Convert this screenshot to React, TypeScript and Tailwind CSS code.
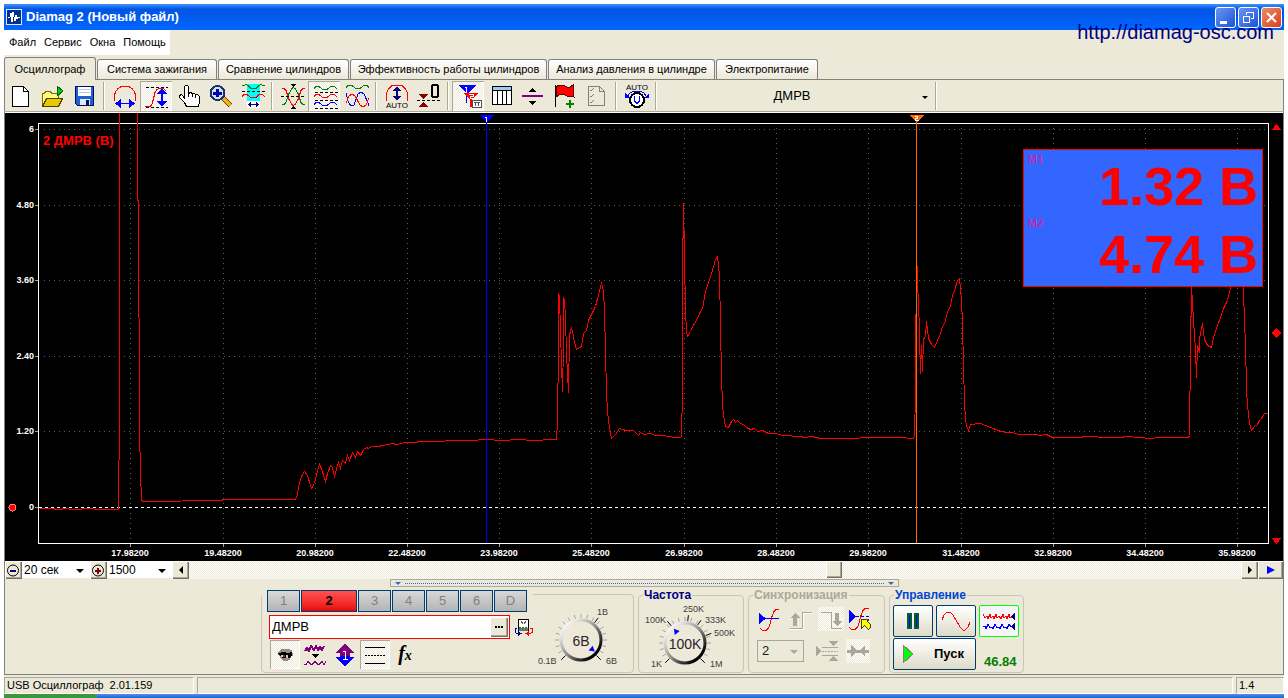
import { useState } from "react"
import type { ReactNode } from "react"

const HATCH = "bg-[repeating-conic-gradient(#ffffff_0_25%,#ece9d8_0_50%)] bg-[length:2px_2px]"

const tabs = [
  { title: "Осциллограф", width: "w-[92px]" },
  { title: "Система зажигания", width: "w-[120px]" },
  { title: "Сравнение цилиндров", width: "w-[131px]" },
  { title: "Эффективность работы цилиндров", width: "w-[197px]" },
  { title: "Анализ давления в цилиндре", width: "w-[167px]" },
  { title: "Электропитание", width: "w-[102px]" },
]

const yAxis = [
  { y: 129, label: "6" },
  { y: 205, label: "4.80" },
  { y: 280, label: "3.60" },
  { y: 356, label: "2.40" },
  { y: 431, label: "1.20" },
  { y: 507, label: "0" },
]

const xAxis = [
  { x: 130, label: "17.98200" },
  { x: 223, label: "19.48200" },
  { x: 315, label: "20.98200" },
  { x: 407, label: "22.48200" },
  { x: 499, label: "23.98200" },
  { x: 591, label: "25.48200" },
  { x: 684, label: "26.98200" },
  { x: 776, label: "28.48200" },
  { x: 868, label: "29.98200" },
  { x: 961, label: "31.48200" },
  { x: 1053, label: "32.98200" },
  { x: 1145, label: "34.48200" },
  { x: 1237, label: "35.98200" },
]

// Air flow sensor signal
const trace =
  "39,508 53,508 55,509 60,509 64,508 72,509 92,508 95,509 118,509 118,491 119,430 119,100 137,100 137,200 138,200 139,430 140,472 141,500 143,501 220,500 224,499 295,499 297,494 299,482 301,476 304,471 307,475 311,488 314,483 317,470 319,464 321,468 325,481 327,473 330,465 332,467 334,477 336,468 338,462 340,468 342,460 345,463 347,455 349,460 352,452 355,457 357,451 360,455 363,449 366,447 368,448 371,446 378,446 382,445 392,443 396,444 405,442 415,442 419,441 440,441 450,440 470,440 486,439 500,440 520,439 530,440 555,439 556,439 557,420 558,348 558,293 559,296 560,331 561,364 562,391 563,345 563,297 564,300 565,316 566,355 567,372 568,392 569,335 571,327 573,336 574,342 576,349 579,347 581,346 583,333 586,330 588,320 591,314 595,306 597,298 600,287 601,283 603,290 604,310 605,352 606,391 607,411 609,427 611,438 615,434 619,428 622,429 626,430 633,430 638,435 640,432 643,434 650,433 655,435 663,435 668,436 675,437 680,437 681,436 682,391 682,275 683,203 684,255 685,313 686,330 687,336 690,331 692,326 695,322 700,311 702,308 705,291 708,282 711,273 715,259 717,256 719,275 720,324 721,377 722,403 723,415 725,426 728,427 731,421 733,419 735,422 737,420 740,423 743,424 746,427 750,429 754,428 757,431 762,430 768,433 776,433 782,435 800,436 804,437 812,436 820,438 850,438 870,437 900,437 912,438 914,437 915,391 916,241 917,288 918,297 919,335 920,373 921,345 922,371 923,338 925,337 926,321 928,338 931,344 934,347 937,340 940,333 942,326 944,323 947,312 950,305 952,295 954,290 957,280 959,278 961,300 962,322 963,367 964,400 965,420 966,425 968,430 970,424 980,423 985,425 990,427 998,430 1005,432 1012,432 1018,434 1035,434 1040,435 1046,434 1052,437 1080,437 1084,436 1110,437 1120,437 1126,436 1150,438 1160,437 1188,437 1189,435 1190,348 1191,285 1193,320 1195,350 1196,377 1197,345 1199,352 1199,338 1202,323 1204,339 1207,345 1211,347 1213,337 1216,328 1220,317 1223,308 1227,300 1230,287 1238,278 1243,287 1244,325 1245,340 1246,390 1247,405 1249,423 1251,430 1254,426 1257,424 1259,420 1261,418 1264,413 1267,413"

function Icon({ children, size = "h-[30px] w-8", box = "0 0 32 30" }: { children: ReactNode; size?: string; box?: string }) {
  return (
    <svg className={`${size} shrink-0`} viewBox={box} fill="none" shapeRendering="crispEdges" aria-hidden="true">
      {children}
    </svg>
  )
}

function ToolButton({ label, pressed = false, children }: { label: string; pressed?: boolean; children: ReactNode }) {
  return (
    <button
      type="button"
      aria-label={label}
      className={`flex h-[30px] w-8 shrink-0 items-center justify-center ${
        pressed ? `${HATCH} shadow-[inset_1px_1px_#aca899,inset_-1px_-1px_#ffffff]` : ""
      }`}
    >
      <Icon>{children}</Icon>
    </button>
  )
}

function Separator() {
  return (
    <div className="flex h-7 w-2 shrink-0 justify-center">
      <div className="w-0.5 border-l border-r border-l-[#aca899] border-r-white" />
    </div>
  )
}

function Toolbar() {
  return (
    <div className="flex h-[31px] items-center">
      <ToolButton label="Новый файл">
        <path d="M8.5 5.5h11l5 5v15h-16z" fill="#fff" stroke="#000" />
        <path d="M19.5 5.5v5h5" stroke="#000" />
      </ToolButton>
      <ToolButton label="Открыть">
        <path d="M6.5 25.5v-13h2l1-2h5l1 2h7v5" fill="#ffff80" stroke="#807000" />
        <path d="M6.5 25.5l4-8h16l-4 8z" fill="#e8c800" stroke="#504000" />
        <path d="M21 5l6 5-6 5z" fill="#00d020" stroke="#006000" />
      </ToolButton>
      <ToolButton label="Сохранить">
        <path d="M7.5 5.5h18v19h-16l-2-2z" fill="#2060c8" stroke="#001060" />
        <path d="M10 6h13v9H10z" fill="#fff" />
        <path d="M11 8.5h11M11 11.5h11" stroke="#b0c8e8" />
        <path d="M12 18h10v6H12z" fill="#e0e8f8" />
        <path d="M18 19h3v5h-3z" fill="#001060" />
      </ToolButton>
      <Separator />
      <ToolButton label="Масштаб по горизонтали">
        <path d="M6.5 20v-6l1-3 2-3 3-2 3-1h3l3 1 3 2 2 3 1 3v6" stroke="#f00" />
        <path d="M10 22.5h14" stroke="#0000ff" />
        <path d="M13 18v9l-6-4.5zM21 18v9l6-4.5z" fill="#0000ff" />
      </ToolButton>
      <ToolButton label="Масштаб по вертикали" pressed>
        <path d="M6 6.5h22M6 26.5h22" stroke="#000" strokeDasharray="3 2" />
        <path d="M5 25.5h5l2-2 1-4 2-8 2-3 2-1h4l3 2" stroke="#f00" />
        <path d="M22 10v13" stroke="#0000ff" strokeWidth="2" />
        <path d="M17 13h10l-5-6zM17 20h10l-5 6z" fill="#0000ff" />
      </ToolButton>
      <ToolButton label="Рука">
        <path
          d="M12.5 17V5.5l1-1h2l1 1v7l2-1 2 1 2 0 1 1 2 0 2 2v6l-1 4h-12l-2-4-5-5v-2l2-1z"
          fill="#fff"
          stroke="#000"
        />
        <path d="M16.500 12v4M20.500 13v3M23.500 14v3" stroke="#000" />
      </ToolButton>
      <ToolButton label="Лупа">
        <path d="M19 17l8 8" stroke="#604000" strokeWidth="5" />
        <path d="M19 17l8 8" stroke="#f0b020" strokeWidth="3" />
        <circle cx="13.5" cy="12" r="7" fill="#c8e4f8" stroke="#203060" strokeWidth="2" />
        <path d="M9 12h9M13.5 8v8" stroke="#0000b0" strokeWidth="3" />
      </ToolButton>
      <ToolButton label="Измерение интервала">
        <path d="M11 3h13v18H11z" fill="#00ffff" />
        <path d="M11 20h13v7H11z" fill="#fff" />
        <path d="M6 4.5h2l2-1 2 1 3 3h5l3-3 2-1 2 1h2" stroke="#008000" />
        <path d="M6 10.5h23" stroke="#000" strokeDasharray="3 2" />
        <path d="M6 15.5l2-2h3l4 3h5l3-3h3l3 2" stroke="#f00" />
        <path d="M12 23.5h11" stroke="#000080" />
        <path d="M15 21v5l-3-2.5zM20 21v5l3-2.5z" fill="#000080" />
      </ToolButton>
      <Separator />
      <ToolButton label="Центрировать">
        <path d="M6 23.5h2l2-2 3-9 3-5 1-1 2 1 3 5 3 9 2 2h2" stroke="#008000" />
        <path d="M6 7.5h2l2 2 3 9 3 5 1 1 2-1 3-5 3-9 2-2h2" stroke="#f00" />
        <path d="M5 15.5h24" stroke="#000" strokeDasharray="3 2" />
        <path d="M14 3h6l-3 3zM14 28h6l-3-3z" fill="#000" />
      </ToolButton>
      <ToolButton label="Раздельные каналы" pressed>
        <path d="M6 7.500l2-2h3l4 3h4l4-3h3l3 2" stroke="#008000" />
        <path d="M6 15.500l2-2h3l4 3h4l4-3h3l3 2" stroke="#f00" />
        <path d="M6 23.500l2-2h3l4 3h4l4-3h3l3 2" stroke="#00f" />
        <path d="M7 11.5h23M7 19.5h23M7 27.5h23" stroke="#000" strokeDasharray="3 2" />
      </ToolButton>
      <ToolButton label="Совместить каналы">
        <path d="M6 6.500l2-2h4l4 3h4l4-3h3l2 2" stroke="#008000" />
        <path d="M6 12l2 8 3 5 3-1 4-11 3-2 3 2 4 9 1 3" stroke="#00f" />
        <path d="M6 22l3-7 3-2 3 2 5 9 3 2 3-2 3-7" stroke="#f00" />
      </ToolButton>
      <Separator />
      <ToolButton label="Автомасштаб">
        <path d="M6.500 20v-8l2-4 3-3 3-1h5l3 1 3 3 2 4v8" stroke="#f00" />
        <path d="M17 8v9" stroke="#000080" strokeWidth="2" />
        <path d="M13 10h8l-4-5zM13 15h8l-4 5z" fill="#000080" />
        <text x="17" y="27" textAnchor="middle" className="fill-black font-['Liberation_Sans'] text-[8px]">
          AUTO
        </text>
      </ToolButton>
      <ToolButton label="Установить ноль">
        <path d="M6 13h10l-5 5zM6 26h10l-5-5z" fill="#800000" />
        <path d="M5 19.5h23" stroke="#000" strokeDasharray="3 2" />
        <rect x="20" y="4" width="6" height="12" rx="2" stroke="#000" strokeWidth="2" />
      </ToolButton>
      <Separator />
      <ToolButton label="Маркеры" pressed>
        <path d="M6 4h18l-9 9z" fill="#00f" />
        <path d="M14.500 10v12" stroke="#00f" />
        <path d="M13 6.500h1.500v5" stroke="#fff" />
        <path d="M12 12h14l-7 8z" fill="#f00" />
        <path d="M19 18v8" stroke="#f00" strokeWidth="2" />
        <path d="M17 13.500h4v2h-3v2h3" stroke="#fff" />
        <path d="M20.5 19.5h9v7h-9z" fill="#fff" stroke="#505050" />
        <path d="M22 21.5h6M23.5 22v3M26.5 22v3" stroke="#505050" />
      </ToolButton>
      <ToolButton label="Таблица">
        <path d="M8.5 5.5h19v18h-19z" fill="#fff" stroke="#000" />
        <path d="M9 6h18v3H9z" fill="#a0c8f0" />
        <path d="M8 9.5h20M13.5 9v14M18.5 9v14M22.5 9v14" stroke="#000" />
      </ToolButton>
      <ToolButton label="Разделить">
        <path d="M6 15h21" stroke="#800080" strokeWidth="2" />
        <path d="M12 11h8l-4-4zM12 20h8l-4 4z" fill="#000" />
      </ToolButton>
      <ToolButton label="Добавить метку">
        <path d="M7.5 4v22" stroke="#000" />
        <path d="M8 6l3-2h4l4 2h3l3-2v10l1 2-4-1h-3l-4-2-4 1-3 2z" fill="#f00" stroke="#600000" />
        <path d="M18 23h8M22 19v8" stroke="#008000" strokeWidth="2" />
      </ToolButton>
      <ToolButton label="Отчёт">
        <path d="M8.5 5.5h11l5 5v14h-16z" stroke="#808080" />
        <path d="M19.5 5.5v5h5M10 9l1 1 3-3M10 15l1 1 3-3M10 21l1 1 3-3" stroke="#808080" />
      </ToolButton>
      <Separator />
      <ToolButton label="Автонастройка">
        <text x="17" y="9" textAnchor="middle" className="fill-black font-['Liberation_Sans'] text-[8px]">
          AUTO
        </text>
        <circle cx="17" cy="19" r="7" fill="#fff" stroke="#000" strokeWidth="2" />
        <path d="M14.5 15v5l2 2h1l2-2v-5" stroke="#00f" />
        <path d="M7 16l3-4 4-2h6l4 2 3 4" stroke="#00f" />
        <path d="M5 12v5h5zM29 12v5h-5z" fill="#00f" />
      </ToolButton>
      <Separator />
      <div className="relative">
        <select
          aria-label="Датчик"
          className="h-7 w-[272px] appearance-none bg-transparent pr-2 text-[13px] text-black [text-align-last:center]"
        >
          <option>ДМРВ</option>
        </select>
        <div className="pointer-events-none absolute right-1 top-3.5 border-x-[3px] border-t-[3px] border-x-transparent border-t-black" />
      </div>
      <Separator />
    </div>
  )
}

function Chart() {
  return (
    <div className="relative border-x border-[#808080] bg-black">
      <svg className="block h-auto w-full" viewBox="5 113 1278 448" shapeRendering="crispEdges" fill="none">
        {yAxis.slice(0, 5).map((t) => (
          <path key={t.label} d={`M44 ${t.y}.5H1267`} stroke="#5a5a5a" strokeDasharray="1 4" />
        ))}
        {xAxis.map((t) => (
          <g key={t.label}>
            <path d={`M${t.x}.5 128V543`} stroke="#5a5a5a" strokeDasharray="1 4" />
            <path d={`M${t.x}.5 544v3`} stroke="#a0a0a0" />
          </g>
        ))}
        <path d="M39 507.5H1268" stroke="#ffffff" strokeDasharray="3 3" />
        <path d="M38.5 123.5H1268.5V543.5H38.5Z" stroke="#ffffff" />
        <g className="fill-white font-['Liberation_Sans'] text-[9px] font-bold">
          {yAxis.map((t) => (
            <g key={t.label}>
              <text x="34" y={t.y + 3} textAnchor="end">
                {t.label}
              </text>
              <path d={`M35 ${t.y}.5h3`} stroke="#a0a0a0" />
            </g>
          ))}
          {xAxis.map((t) => (
            <text key={t.label} x={t.x} y="556" textAnchor="middle">
              {t.label}
            </text>
          ))}
        </g>
        <polyline points={trace} stroke="#ff0000" transform="translate(0.5 0.5)" />
        <text x="43" y="145" className="fill-[#ff0000] font-['Liberation_Sans'] text-[13px] font-bold">
          2 ДМРВ (В)
        </text>

        {/* Cursors */}
        <path d="M486.5 118V543" stroke="#0000ff" />
        <path d="M479 115h15l-7 8z" fill="#0000ff" />
        <path d="M485 117.5h1.5v4" stroke="#fff" />
        <path d="M916.5 118V543" stroke="#ff6600" />
        <path d="M909 115h15l-7 8z" fill="#ff6600" />
        <path d="M915 116.5h2.5v2h-2v2h3" stroke="#fff" />

        {/* Level handles */}
        <circle cx="12.5" cy="507.5" r="3.5" fill="#ff0000" stroke="#ff8080" />
        <path d="M1276.500 124l5 6h-10zM1276.500 328l5 5-5 5-5-5zM1276.500 544l5-6h-10z" fill="#ff0000" />
      </svg>

      <div className="absolute right-5 top-9 flex h-[138px] w-[240px] justify-between border border-[#ff0000] bg-[#3366ff] px-1 text-[#ff0000]">
        <div className="text-[11px] text-[#f81090]">
          <div className="h-16 pt-px">M1</div>
          <div className="h-16 pt-px">M2</div>
        </div>
        <div className="pt-0.5 text-right text-[54px] leading-[68px] font-bold">
          <div>1.32 В</div>
          <div>4.74 В</div>
        </div>
      </div>
    </div>
  )
}

const raised = "bg-[#ece9d8] shadow-[inset_1px_1px_#ffffff,inset_-1px_-1px_#716f64,inset_-2px_-2px_#aca899]"

function ScrollRow() {
  return (
    <div className="flex h-[18px] border-x border-[#808080]">
      <button type="button" aria-label="Уменьшить" className={`w-[17px] shrink-0 ${raised}`}>
        <Icon size="h-[17px] w-[17px]" box="0 0 17 17">
          <circle cx="8" cy="8.5" r="5.5" stroke="#000" shapeRendering="auto" />
          <path d="M5 8.5h6" stroke="#000080" strokeWidth="2" />
        </Icon>
      </button>
      <div className="relative">
        <select aria-label="Время" className="h-[17px] w-[68px] appearance-none bg-white pl-0.5 text-xs">
          <option>20 сек</option>
        </select>
        <div className="pointer-events-none absolute right-1.5 top-2 border-x-4 border-t-4 border-x-transparent border-t-black" />
      </div>
      <button type="button" aria-label="Увеличить" className={`w-[17px] shrink-0 ${raised}`}>
        <Icon size="h-[17px] w-[17px]" box="0 0 17 17">
          <circle cx="8" cy="8.5" r="5.5" stroke="#000" shapeRendering="auto" />
          <path d="M5 9h6M8 6v6" stroke="#800000" strokeWidth="2" />
        </Icon>
      </button>
      <div className="relative">
        <select aria-label="Точек" className="h-[17px] w-[65px] appearance-none bg-white pl-0.5 text-xs">
          <option>1500</option>
        </select>
        <div className="pointer-events-none absolute right-1.5 top-2 border-x-4 border-t-4 border-x-transparent border-t-black" />
      </div>
      <button type="button" aria-label="Назад" className={`flex w-[17px] shrink-0 items-center justify-center ${raised}`}>
        <div className="border-y-4 border-r-4 border-y-transparent border-r-black" />
      </button>
      <div className={`flex flex-1 justify-end pr-[399px] ${HATCH}`}>
        <div className={`h-[17px] w-4 ${raised}`} />
      </div>
      <button type="button" aria-label="Вперёд" className={`flex w-[17px] shrink-0 items-center justify-center ${raised}`}>
        <div className="border-y-4 border-l-4 border-y-transparent border-l-black" />
      </button>
      <button type="button" aria-label="Следить" className={`flex w-[25px] shrink-0 items-center justify-center ${raised}`}>
        <div className="border-y-4 border-l-8 border-y-transparent border-l-[#0000ff]" />
      </button>
    </div>
  )
}

interface Mark {
  angle: number
  label: string
  x: number
  y: number
}

function Knob({ id, box, size, value, pointer, marks }: { id: string; box: string; size: string; value: string; pointer: number; marks: Mark[] }) {
  const at = (deg: number, r: number) => {
    const a = (deg * Math.PI) / 180
    return `${(Math.cos(a) * r).toFixed(1)} ${(-Math.sin(a) * r).toFixed(1)}`
  }
  const ticks = Array.from({ length: 19 }, (_, i) => 225 - i * 15)

  return (
    <svg className={size} viewBox={box} fill="none">
      <defs>
        <linearGradient id={id} x1="0" y1="0" x2="1" y2="1">
          <stop offset="0.1" stopColor="#ffffff" />
          <stop offset="0.5" stopColor="#909090" />
          <stop offset="0.85" stopColor="#000000" />
        </linearGradient>
      </defs>
      {ticks.map((deg) => (
        <path key={deg} d={`M${at(deg, 22)}L${at(deg, 26)}`} stroke="#a8a594" />
      ))}
      {marks.map((m) => (
        <path key={m.label} d={`M${at(m.angle, 22)}L${at(m.angle, 28)}`} stroke="#000" />
      ))}
      <circle r="20" stroke={`url(#${id})`} strokeWidth="3" />
      <path d={`M${at(pointer, 18)}L${at(pointer + 14, 13)}L${at(pointer - 14, 13)}Z`} fill="#0000ff" />
      <text y="6" textAnchor="middle" className="fill-[#302030] font-['Liberation_Sans'] text-[14px]">
        {value}
      </text>
      <g className="fill-[#404040] font-['Liberation_Sans'] text-[9px]">
        {marks.map((m) => (
          <text key={m.label} x={m.x} y={m.y}>
            {m.label}
          </text>
        ))}
      </g>
    </svg>
  )
}

function ChannelPanel() {
  const channels = ["1", "2", "3", "4", "5", "6", "D"]
  return (
    <div className="mt-[5px] flex h-[79px] w-[373px] rounded border border-[#c9c6b5]">
      <div className="-mt-[5px] h-20 w-[271px] bg-[#ece9d8] pl-[5px]">
        <div className="flex gap-px">
          {channels.map((c) => (
            <button
              key={c}
              type="button"
              className={
                c === "2"
                  ? "h-[22px] w-14 border border-[#003c74] bg-linear-to-b from-[#ff5050] to-[#e80000] text-[13px] font-bold text-black"
                  : "h-[22px] w-[33px] border border-[#003c74] bg-linear-to-b from-[#d8d8d8] to-[#b4b4b4] text-[13px] text-[#808080]"
              }
            >
              {c}
            </button>
          ))}
        </div>
        <div className="mt-[3px] ml-0.5 flex items-center gap-1">
          <div className="flex h-6 w-[241px] items-center border border-[#ff0000] bg-white pr-px">
            <input aria-label="Канал" defaultValue="ДМРВ" className="w-full min-w-0 px-0.5 text-[13px] text-black outline-none" />
            <button type="button" aria-label="Выбрать" className={`flex h-5 w-[18px] shrink-0 items-center justify-center gap-px ${raised}`}>
              <div className="h-0.5 w-0.5 bg-black" />
              <div className="h-0.5 w-0.5 bg-black" />
              <div className="h-0.5 w-0.5 bg-black" />
            </button>
          </div>
          <button type="button" aria-label="Калибровка">
            <Icon size="h-[19px] w-[19px]" box="0 0 19 19">
              <path d="M4.5 1.5h10v11h-10z" fill="#fff" stroke="#000" />
              <path d="M5 9.5h9" stroke="#008000" strokeDasharray="2 1" />
              <path d="M5 10h9v3H5z" fill="#707070" />
              <path d="M7 3l2 3M12 3l-2 3" stroke="#606060" />
              <path d="M3 10.500h-1.500v4l1 1h3" stroke="#000080" />
              <path d="M4 13v5l4-2.5z" fill="#000080" />
              <path d="M16 10.500h2v4l-2 1h-3" stroke="#f00" />
              <path d="M15 13v5l-4-2.5z" fill="#f00" />
            </Icon>
          </button>
        </div>
        <div className="mt-px ml-[3px] flex">
          <button type="button" aria-label="Показать" className={`flex h-[29px] w-[30px] items-center justify-center ${HATCH} shadow-[inset_1px_1px_#aca899,inset_-1px_-1px_#ffffff]`}>
            <Icon size="h-5 w-5" box="0 0 20 20">
              <path d="M4 6l3-2h6l4 1v3h1v3h-2l-1 4-4 1H8l-3-4-2-2V8z" fill="#909088" />
              <path d="M3 8l5-1 5 1 4-1v3l-3 3H8L5 11z" fill="#000" />
              <path d="M6 10h3v2H6zM11 10h2v3h-2z" fill="#d8c8c0" />
              <path d="M8 10h2v2H8z" fill="#c01010" />
            </Icon>
          </button>
          <button type="button" aria-label="Фильтр" className="flex h-[29px] w-[30px] items-center justify-center">
            <Icon size="h-6 w-6" box="0 0 24 24">
              <path d="M2 8l2-3 2 3 2-5 3 4 2-4 2 4 2-3 2 3 2-4" stroke="#800080" strokeWidth="2" />
              <path d="M8 11h8l-4 4z" fill="#000" />
              <path d="M1 21.5h2l2-3 3 3h1l3-3 3 3h1l3-3 2 3 2-3" stroke="#800080" />
            </Icon>
          </button>
          <button type="button" aria-label="Инверсия" className="flex h-[29px] w-[30px] items-center justify-center">
            <Icon size="h-6 w-6" box="0 0 24 24">
              <path d="M12 1l9 8v1h-4v3H7v-3H3V9z" fill="#800080" />
              <path d="M12 23l9-8v-1h-4v-1H7v1H3v1z" fill="#0000ff" />
              <path d="M10 8.500h2.500v8M10 16.500h5" stroke="#fff" />
            </Icon>
          </button>
          <button type="button" aria-label="Границы" className={`flex h-[29px] w-[30px] items-center justify-center ${HATCH} shadow-[inset_1px_1px_#aca899,inset_-1px_-1px_#ffffff]`}>
            <Icon size="h-5 w-5" box="0 0 20 20">
              <path d="M0 2.5h20M0 18.5h20" stroke="#000" />
              <path d="M0 10.5h20" stroke="#000" strokeDasharray="2 1" />
            </Icon>
          </button>
          <button type="button" aria-label="Функция" className="h-[29px] w-[30px] font-['Liberation_Serif',serif] text-xl leading-5 font-bold italic text-black">
            f<span className="text-sm">x</span>
          </button>
        </div>
      </div>
      <Knob
        id="rangeKnob"
        box="-48 -45 96 77"
        size="h-[77px] w-24"
        value="6В"
        pointer={-40}
        marks={[
          { angle: 225, label: "0.1В", x: -43, y: 24 },
          { angle: 52, label: "1В", x: 16, y: -25 },
          { angle: -45, label: "6В", x: 25, y: 24 },
        ]}
      />
    </div>
  )
}

function Group({ title, color, width, children }: { title: string; color: string; width: string; children: ReactNode }) {
  return (
    <fieldset className={`h-[84px] rounded border border-[#c9c6b5] ${width}`}>
      <legend className={`ml-1 h-3 px-px text-xs leading-3 font-bold ${color}`}>{title}</legend>
      {children}
    </fieldset>
  )
}

function SyncPanel() {
  return (
    <Group title="Синхронизация" color="text-[#aca899]" width="w-[137px]">
      <div className="flex h-9 items-center gap-1 pl-2">
        <button type="button" aria-label="Уровень">
          <Icon size="h-6 w-[27px]" box="0 0 27 24">
            <path d="M3 21.500l3 2h3l3-3 3-11 2-5 2-2h3" stroke="#f00" />
            <path d="M2 11.5h20" stroke="#00f" />
            <path d="M2 6v11l7-5.5z" fill="#00f" />
          </Icon>
        </button>
        <button type="button" aria-label="По фронту" disabled>
          <Icon size="h-6 w-[26px]" box="0 0 26 24">
            <path d="M2 22.5h13V6.5h9" stroke="#fff" />
            <path d="M2 21.5h12V5.5h10" stroke="#aca899" strokeWidth="1" />
            <path d="M7 6l5 5H9v8H5v-8H2z" fill="#aca899" />
          </Icon>
        </button>
        <button type="button" aria-label="По спаду" disabled className={HATCH}>
          <Icon size="h-6 w-[26px]" box="0 0 26 24">
            <path d="M3 5.5h10v16h11" stroke="#aca899" />
            <path d="M19 19l-5-5h3V6h4v8h3z" fill="#aca899" />
          </Icon>
        </button>
        <button type="button" aria-label="Выбрать уровень">
          <Icon size="h-6 w-6" box="0 0 24 24">
            <path d="M1 20.500l3 2h3l3-3 3-11 2-5 2-2h4" stroke="#f00" />
            <path d="M8 9.5h15" stroke="#00f" strokeDasharray="3 2" />
            <path d="M1 3v13l7-6.5z" fill="#00f" />
            <path d="M13.5 12.5h7l-1 2 3 3v3l-2 2-4-4-3 3z" fill="#ffff00" stroke="#404000" />
          </Icon>
        </button>
      </div>
      <div className="flex items-center gap-3 pt-0.5 pl-2">
        <div className="relative">
          <select
            aria-label="Канал синхронизации"
            disabled
            className="block h-[22px] w-[47px] appearance-none border border-[#aca899] pl-1 text-[13px] text-[#202020] opacity-100"
          >
            <option>2</option>
          </select>
          <div className="pointer-events-none absolute right-1.5 top-2.5 border-x-4 border-t-4 border-x-transparent border-t-[#aca899]" />
        </div>
        <Icon size="h-[22px] w-[22px]" box="0 0 22 22">
          <path d="M0 5v12l5-6zM12 1h10l-5 5zM12 21h10l-5-5z" fill="#aca899" />
          <path d="M6 7.5h16M6 15.5h16" stroke="#aca899" />
          <path d="M6 11.5h16" stroke="#aca899" strokeDasharray="2 1" />
        </Icon>
        <button type="button" aria-label="Сжать" disabled className={`-ml-1 ${HATCH}`}>
          <Icon size="h-6 w-6" box="0 0 24 24">
            <path d="M1 12h22" stroke="#aca899" strokeWidth="3" />
            <path d="M5 6v12l6-6zM19 6v12l-6-6z" fill="#aca899" />
          </Icon>
        </button>
      </div>
    </Group>
  )
}

function ControlPanel() {
  const xpButton = "flex h-8 items-center rounded-xs border border-[#003c74] bg-linear-to-b from-white to-[#dedbc8]"
  return (
    <Group title="Управление" color="text-[#0046d5]" width="w-[135px]">
      <div className="flex gap-[3px] pt-1 pl-[3px]">
        <button type="button" aria-label="Пауза" className={`w-10 justify-center ${xpButton}`}>
          <Icon size="h-4 w-4" box="0 0 16 16">
            <path d="M3 1h3v14H3zM10 1h3v14h-3z" fill="#00f" stroke="#006030" strokeWidth="2" />
          </Icon>
        </button>
        <button type="button" aria-label="Осциллограмма" className={`w-10 justify-center ${xpButton}`}>
          <Icon size="h-6 w-7" box="0 0 28 24">
            <path d="M0 11l2-5 3-3h3l3 3 7 12 3 3h2l3-3 2-5" stroke="#f00" />
          </Icon>
        </button>
        <button type="button" aria-label="Запись" className="flex h-8 w-10 items-center justify-center rounded-xs border border-[#00ff00] bg-[#f5f4f8]">
          <Icon size="h-6 w-8" box="0 0 32 24">
            <path d="M0 5.500l2 3 2-1 1 2 2-4 1 3 2-1 1 2 2-4 1 3 2-1 2 2 2-4 1 3 2-1 1 2 2-4 1 3h3" stroke="#f00" />
            <path d="M0 17.500h2l1 2 2-4 2 3h2l1 1 2-4 2 3h2l1 1 2-4 2 3h2l1 1 2-4 2 2h2" stroke="#00f" />
            <path d="M32 4v7l-4-3.500zM32 14v7l-4-3.500z" fill="#000080" />
          </Icon>
        </button>
      </div>
      <div className="flex items-end gap-2 pt-px pl-[3px]">
        <button type="button" className={`w-[83px] gap-5 pl-2 text-[13px] font-bold text-black ${xpButton}`}>
          <Icon size="h-5 w-3" box="0 0 12 20">
            <path d="M1 1v18l10-9z" fill="#00ff00" stroke="#808080" />
          </Icon>
          Пуск
        </button>
        <span className="text-[13px] leading-4 font-bold text-[#008000]">46.84</span>
      </div>
    </Group>
  )
}

export default function App() {
  const [active, setActive] = useState(0)

  return (
    <div className="bg-white px-1 pt-1 font-['Liberation_Sans',Arial,sans-serif] text-[11px] text-black">
      <div className="relative bg-[#ece9d8]">
        {/* Title bar */}
        <header className="flex h-[26px] items-center justify-between bg-linear-to-b from-[#3d95ff] via-[#0054e3] via-20% to-[#0066ff] pr-0.5 pl-0.5">
          <div className="flex items-center gap-1">
            <Icon size="h-4 w-4" box="0 0 16 16">
              <path d="M0.5 0.5h15v15H0.5z" fill="#003090" stroke="#e0e8ff" />
              <path d="M2 8h2l1-4 1 9 1-10 2 9 1-6 1 4 1-2h2" stroke="#fff" />
            </Icon>
            <h1 className="text-[13px] font-bold text-white">Diamag 2 (Новый файл)</h1>
          </div>
          <div className="flex gap-0.5">
            <button type="button" aria-label="Свернуть" className="h-[21px] w-[21px] rounded-[3px] border border-white bg-linear-to-br from-[#6a96f0] to-[#1c50d8]">
              <Icon size="h-[19px] w-[19px]" box="0 0 19 19">
                <path d="M4 13h7v3H4z" fill="#fff" />
              </Icon>
            </button>
            <button type="button" aria-label="Восстановить" className="h-[21px] w-[21px] rounded-[3px] border border-white bg-linear-to-br from-[#6a96f0] to-[#1c50d8]">
              <Icon size="h-[19px] w-[19px]" box="0 0 19 19">
                <path d="M7.5 7V4.5h7v6H12M4.5 8.5h6v6h-6zM4 8h7M7 4h8" stroke="#fff" />
              </Icon>
            </button>
            <button type="button" aria-label="Закрыть" className="h-[21px] w-[21px] rounded-[3px] border border-white bg-linear-to-br from-[#ec8a68] to-[#d83c10]">
              <Icon size="h-[19px] w-[19px]" box="0 0 19 19">
                <path d="M5 5l9 9M14 5l-9 9" stroke="#fff" strokeWidth="2" shapeRendering="auto" />
              </Icon>
            </button>
          </div>
        </header>
        <a href="http://diamag-osc.com" className="absolute top-4 right-2.5 text-xl leading-6 text-[#000080]">
          http://diamag-osc.com
        </a>

        {/* Menu */}
        <nav className="flex h-[25px] w-[166px] items-center gap-2 bg-white pl-[5px]">
          <button type="button">Файл</button>
          <button type="button">Сервис</button>
          <button type="button">Окна</button>
          <button type="button">Помощь</button>
        </nav>

        {/* Tabs */}
        <div role="tablist" className="flex h-6 items-end gap-px">
          {tabs.map((tab, i) => (
            <button
              key={tab.title}
              type="button"
              role="tab"
              aria-selected={i === active}
              onClick={() => setActive(i)}
              className={`${tab.width} shrink-0 rounded-t-[3px] border-x border-t border-[#808080] whitespace-nowrap ${
                i === active ? "-mb-px h-[23px] bg-[#ece9d8]" : "h-5 bg-linear-to-b from-white to-[#ece9d8]"
              }`}
            >
              {tab.title}
            </button>
          ))}
        </div>

        <div className="border-x border-t border-[#808080]">
          <div className="-mx-px border-b border-[#aca899]">
            <Toolbar />
          </div>
          <div className="h-px bg-white" />
        </div>

        <Chart />
        <ScrollRow />

        <div className="border-x border-b border-[#808080]">
          <div className="mx-auto flex h-2 w-[509px] items-center justify-between border border-[#aca899] px-1">
            <div className="border-x-[3px] border-t-[3px] border-x-transparent border-t-[#316ac5]" />
            <div className="mx-1 flex-1 border-t border-dotted border-[#316ac5]" />
            <div className="border-x-[3px] border-t-[3px] border-x-transparent border-t-[#316ac5]" />
          </div>
          <div className="flex h-[87px] justify-center gap-1 pt-0.5 pr-[3px]">
            <ChannelPanel />
            <Group title="Частота" color="text-[#000080]" width="w-[106px]">
              <Knob
                id="rateKnob"
                box="-46 -42 104 71"
                size="h-[71px] w-[104px]"
                value="100K"
                pointer={128}
                marks={[
                  { angle: 225, label: "1K", x: -34, y: 24 },
                  { angle: 129, label: "100K", x: -40, y: -20 },
                  { angle: 83, label: "250K", x: -2, y: -31 },
                  { angle: 55, label: "333K", x: 20, y: -20 },
                  { angle: 20, label: "500K", x: 29, y: -7 },
                  { angle: -45, label: "1M", x: 25, y: 24 },
                ]}
              />
            </Group>
            <SyncPanel />
            <ControlPanel />
          </div>
        </div>

        {/* Status bar */}
        <footer className="flex h-[19px] gap-[3px] pt-0.5">
          <div className="flex w-[190px] items-center gap-1.5 border border-[#aca899] border-r-white border-b-white pl-0.5 whitespace-nowrap">
            <span>USB Осциллограф</span>
            <span>2.01.159</span>
          </div>
          <div className="flex-1 border border-[#aca899] border-r-white border-b-white" />
          <div className="flex w-12 items-center border border-[#aca899] border-r-white border-b-white pl-0.5">1.4</div>
        </footer>
        <div className="flex h-1 bg-linear-to-b from-[#5090f0] to-[#2060d0]">
          <div className="w-[93px] rounded-tr bg-[#3c963c]" />
        </div>
      </div>
    </div>
  )
}
